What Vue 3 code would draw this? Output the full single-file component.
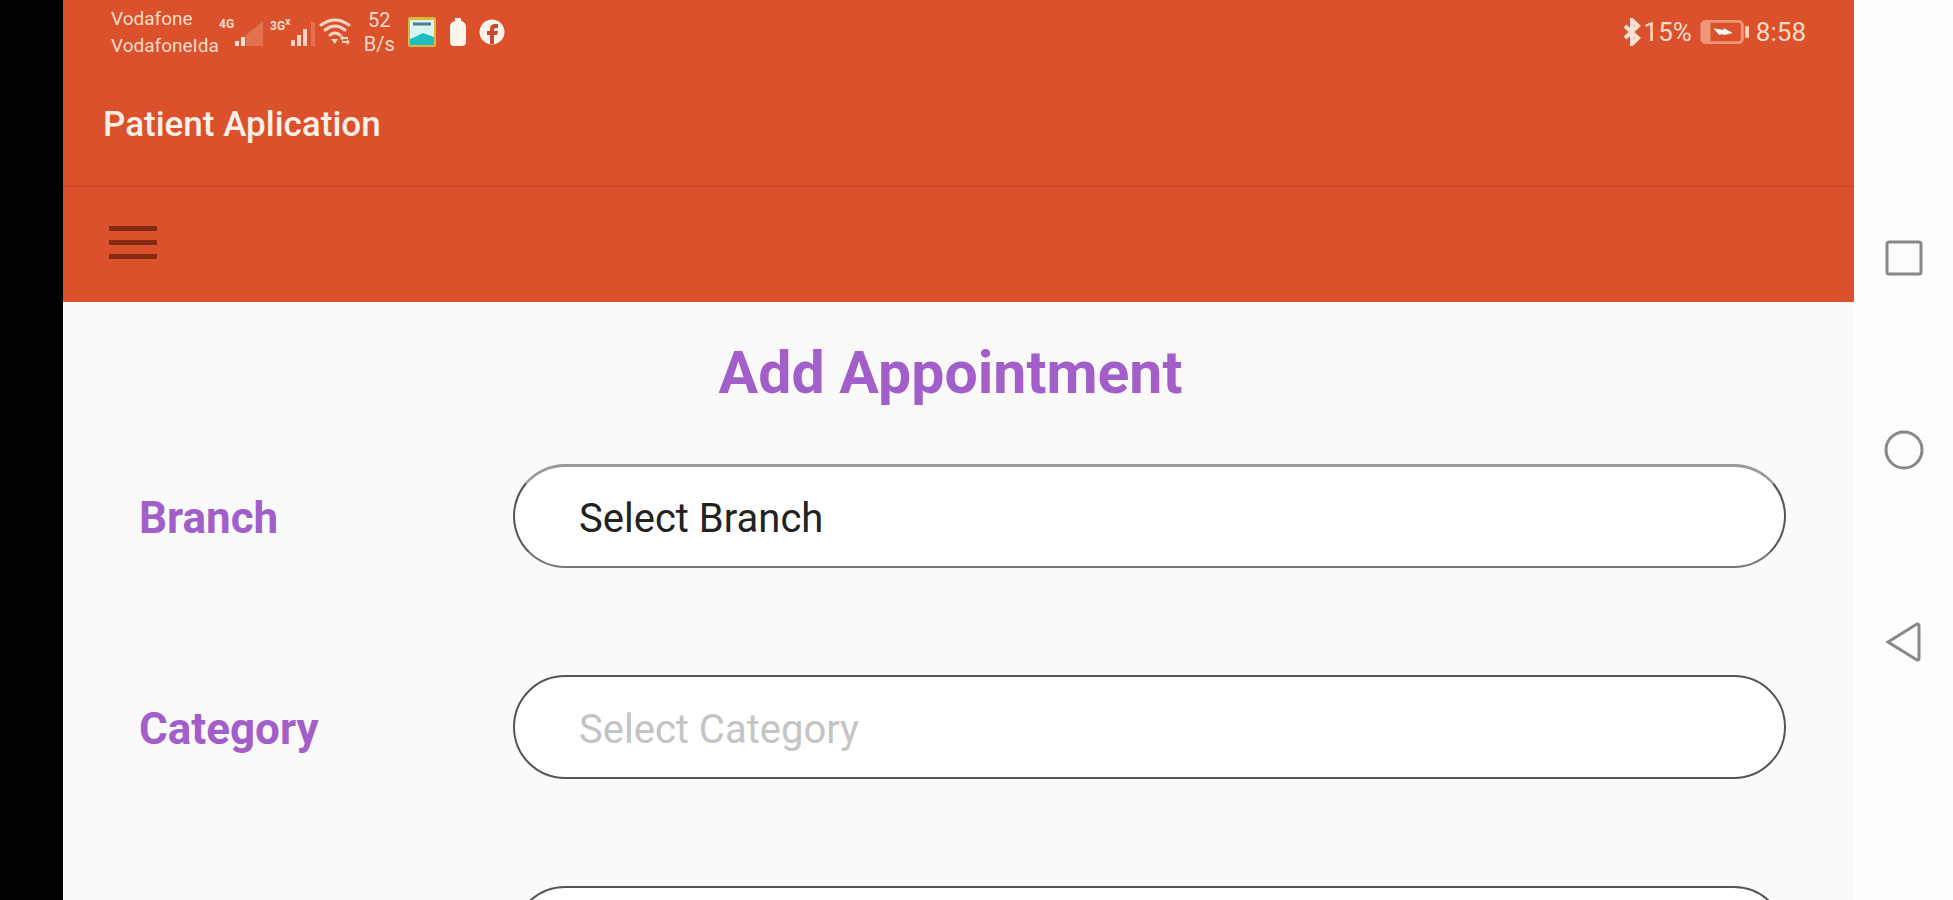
<script setup>
import { ref } from 'vue';

const fields = ref([
    { id: 'branch', label: 'Branch', options: ['Select Branch'], filled: true },
    { id: 'category', label: 'Category', options: ['Select Category'], filled: false },
    { id: 'detail', label: '', options: [''], filled: false },
]);
</script>

<template>
    <div class="device">
        <div class="screen">
            <header class="top">
                <div class="status">
                    <div class="carriers">
                        <span>Vodafone</span>
                        <span>VodafoneIda</span>
                    </div>
                    <div class="signal">
                        <span class="net">4G</span>
                        <svg width="30" height="26" viewBox="0 0 30 26">
                            <path d="M12 15 L29 1 V26 H12 Z" fill="#e2714f" />
                            <path d="M1 21h4v5H1z M7 17h4v9H7z" fill="#fde3d4" />
                        </svg>
                    </div>
                    <div class="signal second">
                        <span class="net">3G<sup>x</sup></span>
                        <svg width="26" height="26" viewBox="0 0 26 26">
                            <path d="M1 20h4v6H1z M7 15h4v11H7z M13 9h4v17h-4z" fill="#fbd3c2" />
                            <path d="M21 2h4v24h-4z" fill="#e2714f" />
                        </svg>
                    </div>
                    <svg class="wifi" width="32" height="28" viewBox="0 0 32 28">
                        <g fill="none" stroke="#fbd9c8" stroke-width="3" stroke-linecap="round">
                            <path d="M2 7 Q16 -3 30 7" />
                            <path d="M6 12 Q16 4 26 12" />
                            <path d="M11 17 Q16 13 21 17" />
                        </g>
                        <path d="M12 21l4 5 3-5z M21 20l3-3v2h5v2h-5v2z M31 24l-3 3v-2h-5v-2h5v-2z" fill="#fbd9c8" />
                    </svg>
                    <div class="speed">
                        <span>52</span>
                        <span>B/s</span>
                    </div>
                    <svg class="photo" width="30" height="32" viewBox="0 0 30 32">
                        <rect x="1" y="1" width="28" height="30" rx="2" fill="#d9b83e" />
                        <rect x="3" y="4" width="24" height="25" fill="#d9f5f1" />
                        <path d="M6 8h18" stroke="#4b7f86" stroke-width="3" />
                        <path d="M3 23l7-3 6-3 11 4v8H3z" fill="#1cc0c0" />
                    </svg>
                    <svg class="cell" width="18" height="28" viewBox="0 0 18 28">
                        <path d="M6 0h6v3h1q4 2 4 6v15q0 4-4 4H5q-4 0-4-4V9q0-4 4-6h1z" fill="#fff4ea" />
                    </svg>
                    <svg class="fb" width="26" height="26" viewBox="0 0 26 26">
                        <circle cx="13" cy="13" r="12.5" fill="#fff4ee" />
                        <path d="M11 25v-9H8v-4h3V10q0-5 5-5h3v4h-2q-2 0-2 2v1h4l-1 4h-3v9z" fill="#c9492a" />
                    </svg>
                    <div class="right">
                        <svg width="20" height="28" viewBox="0 0 20 28">
                            <path d="M3 8l13 12-6 6V2l6 6L3 20" fill="none" stroke="#fde3d4" stroke-width="4" />
                        </svg>
                        <span class="percent">15%</span>
                        <svg class="battery" width="50" height="26" viewBox="0 0 52 26">
                            <rect x="2" y="2" width="42" height="22" rx="4" fill="none" stroke="#f0977a" stroke-width="3" />
                            <path d="M3 3h8v20H3z" fill="#f0977a" />
                            <path d="M47 7h4v12h-4z" fill="#fbd3c2" />
                            <path d="M14 9l10 2 1-2 9 5-9 2-2-1-3 1z" fill="#fff" />
                        </svg>
                        <span class="clock">8:58</span>
                    </div>
                </div>
                <h1>Patient Aplication</h1>
            </header>
            <div class="toolbar">
                <button class="menu" type="button" aria-label="Menu">
                    <span></span>
                    <span></span>
                    <span></span>
                </button>
            </div>
            <main>
                <h2>Add Appointment</h2>
                <form>
                    <div v-for="f in fields" :key="f.id" class="row">
                        <label :for="f.id">{{ f.label }}</label>
                        <select :id="f.id" :class="{ filled: f.filled }">
                            <option v-for="o in f.options" :key="o">{{ o }}</option>
                        </select>
                    </div>
                </form>
            </main>
        </div>
        <nav class="keys">
            <button type="button" aria-label="Recent apps">
                <svg width="40" height="40" viewBox="0 0 40 40">
                    <rect x="3" y="4" width="34" height="32" rx="2" />
                </svg>
            </button>
            <button type="button" aria-label="Home">
                <svg width="40" height="40" viewBox="0 0 40 40">
                    <circle cx="20" cy="20" r="18" />
                </svg>
            </button>
            <button type="button" aria-label="Back">
                <svg width="40" height="40" viewBox="0 0 40 40">
                    <path d="M4 20 L33 2 Q35 2 35 4 V36 Q35 38 33 38 Z" />
                </svg>
            </button>
        </nav>
    </div>
</template>

<style>
body {
    margin: 0;
}
</style>

<style scoped>
.device {
    display: flex;
    height: 100vh;
    overflow: hidden;
    box-sizing: border-box;
    border-left: 63px solid #000;
    background: #fafafa;
    font-family: Roboto, sans-serif;
}

button {
    padding: 0;
    border: 0;
    background: none;
}

.screen {
    flex: 1;
    min-width: 0;
}

.top {
    height: 185px;
    background: #db512b;
    border-bottom: 2px solid #cc4a29;
}

.status {
    display: flex;
    align-items: center;
    height: 64px;
    padding: 0 48px;
    color: #fddccb;
}

.carriers {
    display: flex;
    flex-direction: column;
    width: 108px;
    font-size: 19px;
    line-height: 27px;
}

.signal {
    display: flex;
    align-items: flex-end;
    height: 28px;
}

.signal .net {
    align-self: flex-start;
    font-size: 12px;
    line-height: 12px;
    font-weight: 700;
}

.net sup {
    font-size: 10px;
    line-height: 8px;
}

.second {
    margin-left: 6px;
}

.wifi {
    margin-left: 3px;
}

.speed {
    display: flex;
    flex-direction: column;
    align-items: center;
    width: 32px;
    margin-left: 12px;
    font-size: 20px;
    line-height: 24px;
}

.photo,
.cell,
.fb {
    margin-left: 12px;
}

.right {
    display: flex;
    align-items: center;
    margin-left: auto;
    font-size: 26px;
}

.percent {
    margin: 0 8px 0 2px;
}

.clock {
    margin-left: 6px;
}

h1 {
    margin: 0;
    padding: 41px 40px 0;
    font-size: 35px;
    line-height: 40px;
    font-weight: 500;
    color: #fff0e8;
}

.toolbar {
    display: flex;
    align-items: center;
    height: 111px;
    padding: 0 46px 4px;
    background: #db512b;
}

.menu {
    display: flex;
    flex-direction: column;
    gap: 9px;
    width: 48px;
}

.menu span {
    height: 5px;
    background: #842a12;
}

main {
    padding: 36px 68px 0 76px;
}

h2 {
    margin: 0 0 56px;
    padding-right: 24px;
    text-align: center;
    font-size: 59px;
    line-height: 70px;
    font-weight: 700;
    color: #a35fc9;
}

form {
    display: grid;
    gap: 107px;
}

.row {
    display: grid;
    grid-template-columns: 374px 1fr;
    align-items: center;
}

label {
    padding-top: 4px;
    font-size: 44px;
    line-height: 48px;
    font-weight: 700;
    color: #a35fc9;
}

select {
    width: 100%;
    height: 104px;
    padding: 4px 64px 0;
    appearance: none;
    border: 2px solid #555;
    border-radius: 52px;
    background: #fff;
    font-family: inherit;
    font-size: 40px;
    color: #c4c4c4;
}

select.filled {
    border-top: 3px solid #999;
    border-bottom-color: #777;
    color: #222;
}

.keys {
    display: flex;
    flex-direction: column;
    align-items: center;
    justify-content: center;
    gap: 152px;
    width: 99px;
    background: #fdfdfd;
}

.keys button {
    height: 40px;
}

.keys svg {
    display: block;
    fill: none;
    stroke: #888;
    stroke-width: 3;
}
</style>
